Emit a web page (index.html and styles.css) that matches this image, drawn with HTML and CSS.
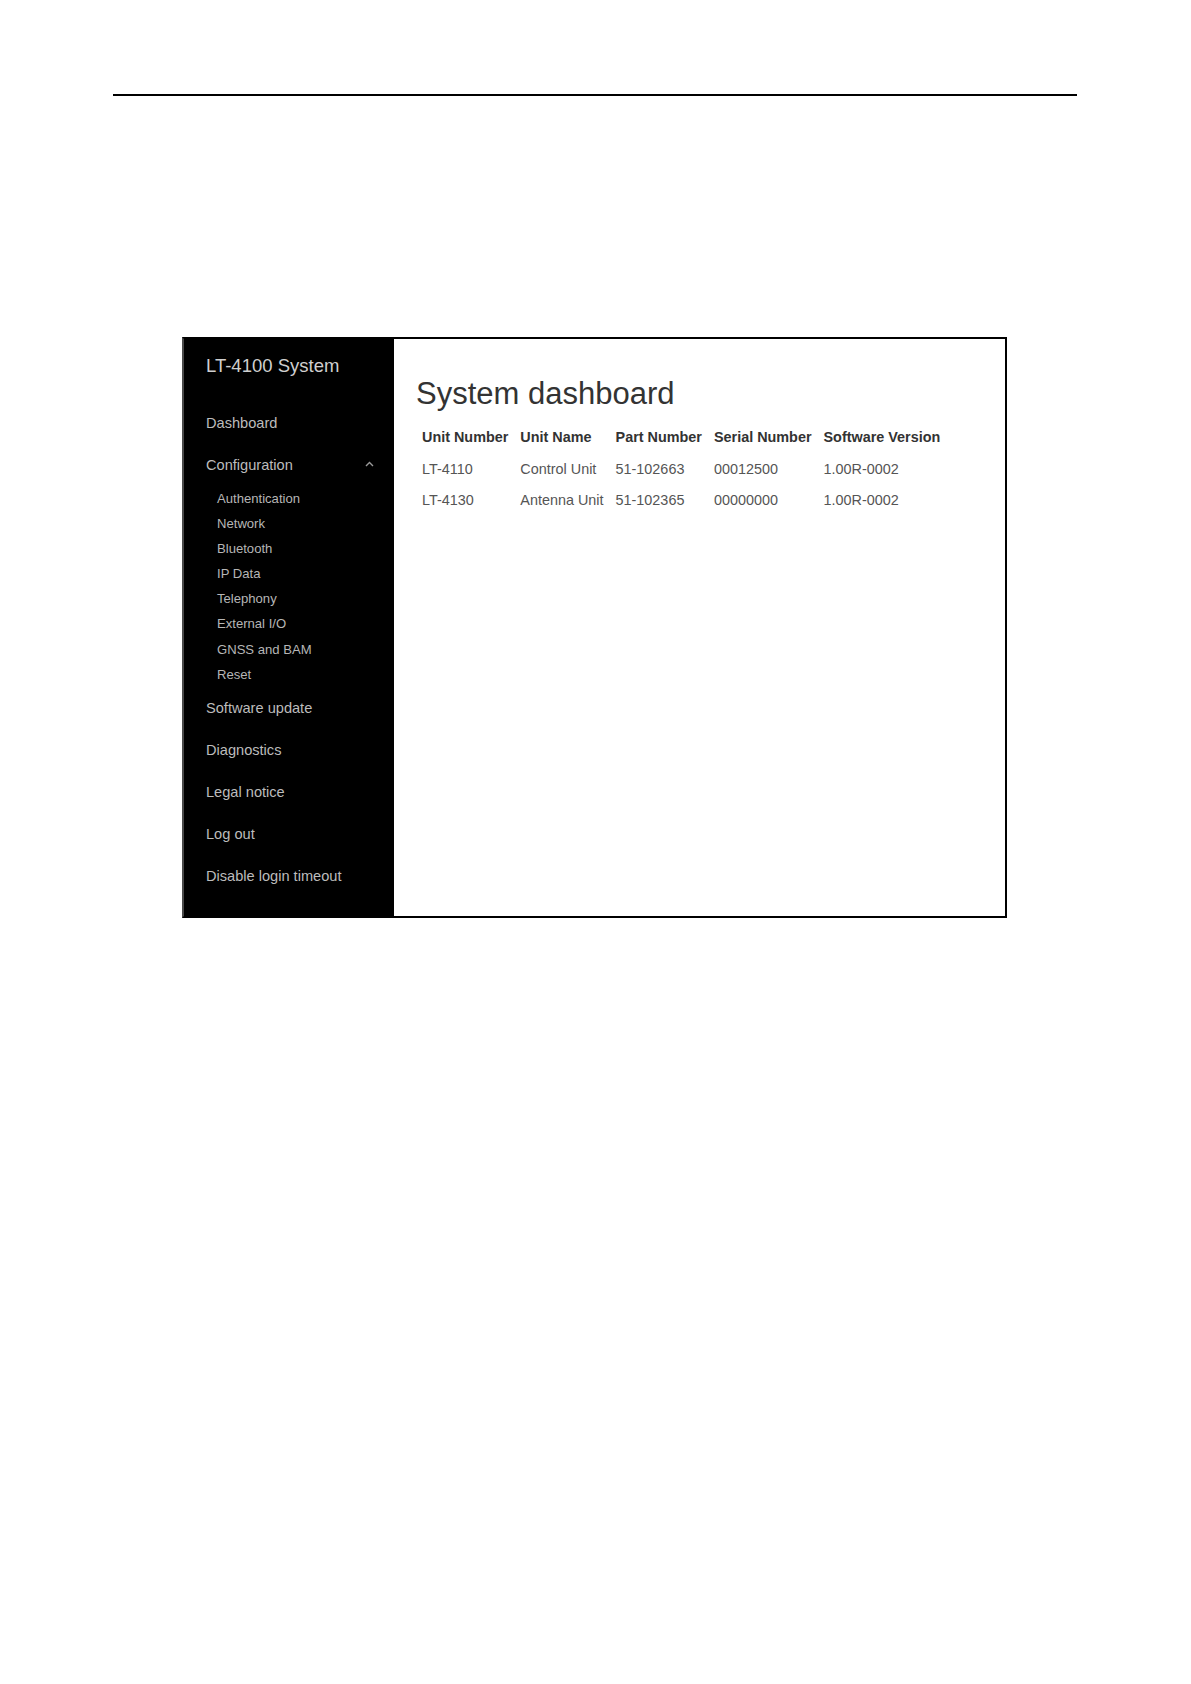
FILE: index.html
```html
<!DOCTYPE html>
<html lang="en">
<head>
<meta charset="utf-8">
<title>LT-4100 System</title>
<link rel="stylesheet" href="styles.css">
</head>
<body>
<div class="page">
  <div class="rule"></div>
  <div class="shot">
    <nav class="sidebar">
      <div class="brand">LT-4100 System</div>
      <div class="nav-item">Dashboard</div>
      <div class="nav-item nav-group">
        <span>Configuration</span>
        <svg class="chev" width="9" height="6" viewBox="0 0 9 6"><polyline points="1,5 4.5,1.5 8,5" fill="none" stroke="#9a9a9a" stroke-width="1.4"/></svg>
      </div>
      <ul class="sub">
        <li>Authentication</li>
        <li>Network</li>
        <li>Bluetooth</li>
        <li>IP Data</li>
        <li>Telephony</li>
        <li>External I/O</li>
        <li>GNSS and BAM</li>
        <li>Reset</li>
      </ul>
      <div class="nav-item">Software update</div>
      <div class="nav-item">Diagnostics</div>
      <div class="nav-item">Legal notice</div>
      <div class="nav-item">Log out</div>
      <div class="nav-item">Disable login timeout</div>
    </nav>
    <main class="main">
      <h1 class="title">System dashboard</h1>
      <table class="units">
        <thead>
          <tr><th>Unit Number</th><th>Unit Name</th><th>Part Number</th><th>Serial Number</th><th>Software Version</th></tr>
        </thead>
        <tbody>
          <tr><td>LT-4110</td><td>Control Unit</td><td>51-102663</td><td>00012500</td><td>1.00R-0002</td></tr>
          <tr><td>LT-4130</td><td>Antenna Unit</td><td>51-102365</td><td>00000000</td><td>1.00R-0002</td></tr>
        </tbody>
      </table>
    </main>
  </div>
</div>
</body>
</html>
```
FILE: styles.css
```css
html, body {
  margin: 0;
  padding: 0;
  background: #ffffff;
}
body {
  font-family: "Liberation Sans", Arial, sans-serif;
}
.page {
  width: 1191px;
  min-height: 1684px;
  padding-top: 94px;
  box-sizing: border-box;
}
.rule {
  margin-left: 113px;
  width: 964px;
  height: 2px;
  background: #000;
}
.shot {
  display: flex;
  margin-top: 241px;
  margin-left: 182px;
  width: 825px;
  height: 581px;
  box-sizing: border-box;
  border: 2px solid #000;
  border-left-color: #4a4a4a;
}
.sidebar {
  width: 210px;
  flex-shrink: 0;
  background: #000;
  padding-top: 15px;
  box-sizing: border-box;
  color: #bdbdbd;
}
.brand {
  padding-left: 22px;
  font-size: 18.5px;
  line-height: 24px;
  color: #cfcfcf;
  margin-bottom: 24px;
}
.nav-item {
  padding: 11px 0 11px 22px;
  font-size: 14.6px;
  line-height: 20px;
  color: #bcbcbc;
}
.nav-group {
  display: flex;
  align-items: center;
  justify-content: space-between;
  padding-right: 20px;
}
.chev {
  display: block;
  margin-top: -2px;
}
.sub {
  list-style: none;
  margin: 0;
  padding: 0 0 0 33px;
}
.sub li {
  font-size: 13.1px;
  line-height: 25.1px;
  color: #b6b6b6;
}
.main {
  flex: 1;
  background: #fff;
  padding: 37px 0 0 22px;
}
.title {
  margin: 0 0 9px 0;
  font-size: 31px;
  line-height: 36px;
  font-weight: normal;
  color: #333;
}
.units {
  border-collapse: collapse;
  font-size: 14.4px;
  line-height: 20px;
}
.units th {
  text-align: left;
  font-weight: bold;
  color: #333;
  padding: 5.5px 6px 6.5px 6px;
  white-space: nowrap;
}
.units td {
  color: #555;
  padding: 5.5px 6px;
  white-space: nowrap;
}
```
